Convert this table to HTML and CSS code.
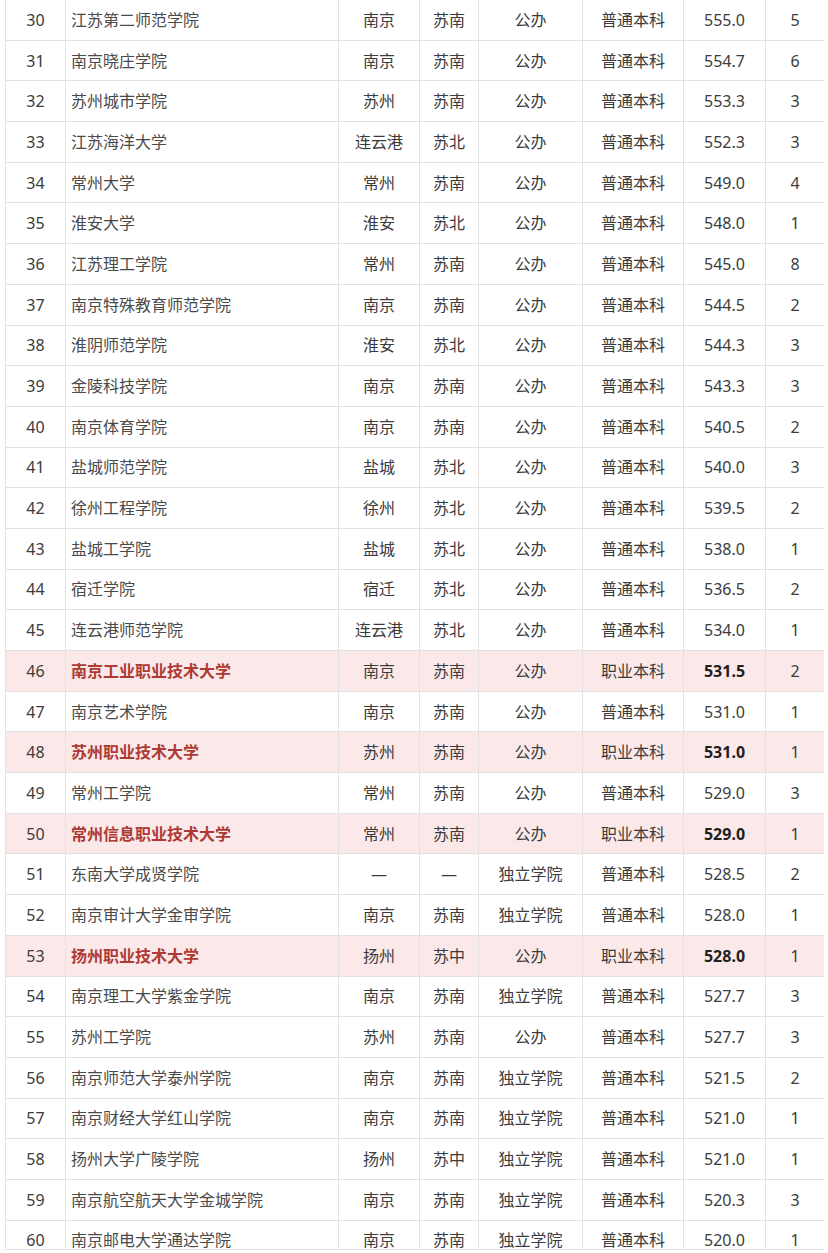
FILE: index.html
```html
<!DOCTYPE html>
<html lang="zh-CN">
<head>
<meta charset="utf-8">
<title>江苏院校排名</title>
<link rel="stylesheet" href="styles.css">
</head>
<body>
<div class="frame">
<table class="rank">
<colgroup>
<col class="c-no"><col class="c-name"><col class="c-city"><col class="c-area"><col class="c-type"><col class="c-level"><col class="c-score"><col class="c-n">
</colgroup>
<tbody>
<tr><td>30</td><td class="name">江苏第二师范学院</td><td>南京</td><td>苏南</td><td>公办</td><td>普通本科</td><td>555.0</td><td>5</td></tr>
<tr><td>31</td><td class="name">南京晓庄学院</td><td>南京</td><td>苏南</td><td>公办</td><td>普通本科</td><td>554.7</td><td>6</td></tr>
<tr><td>32</td><td class="name">苏州城市学院</td><td>苏州</td><td>苏南</td><td>公办</td><td>普通本科</td><td>553.3</td><td>3</td></tr>
<tr><td>33</td><td class="name">江苏海洋大学</td><td>连云港</td><td>苏北</td><td>公办</td><td>普通本科</td><td>552.3</td><td>3</td></tr>
<tr><td>34</td><td class="name">常州大学</td><td>常州</td><td>苏南</td><td>公办</td><td>普通本科</td><td>549.0</td><td>4</td></tr>
<tr><td>35</td><td class="name">淮安大学</td><td>淮安</td><td>苏北</td><td>公办</td><td>普通本科</td><td>548.0</td><td>1</td></tr>
<tr><td>36</td><td class="name">江苏理工学院</td><td>常州</td><td>苏南</td><td>公办</td><td>普通本科</td><td>545.0</td><td>8</td></tr>
<tr><td>37</td><td class="name">南京特殊教育师范学院</td><td>南京</td><td>苏南</td><td>公办</td><td>普通本科</td><td>544.5</td><td>2</td></tr>
<tr><td>38</td><td class="name">淮阴师范学院</td><td>淮安</td><td>苏北</td><td>公办</td><td>普通本科</td><td>544.3</td><td>3</td></tr>
<tr><td>39</td><td class="name">金陵科技学院</td><td>南京</td><td>苏南</td><td>公办</td><td>普通本科</td><td>543.3</td><td>3</td></tr>
<tr><td>40</td><td class="name">南京体育学院</td><td>南京</td><td>苏南</td><td>公办</td><td>普通本科</td><td>540.5</td><td>2</td></tr>
<tr><td>41</td><td class="name">盐城师范学院</td><td>盐城</td><td>苏北</td><td>公办</td><td>普通本科</td><td>540.0</td><td>3</td></tr>
<tr><td>42</td><td class="name">徐州工程学院</td><td>徐州</td><td>苏北</td><td>公办</td><td>普通本科</td><td>539.5</td><td>2</td></tr>
<tr><td>43</td><td class="name">盐城工学院</td><td>盐城</td><td>苏北</td><td>公办</td><td>普通本科</td><td>538.0</td><td>1</td></tr>
<tr><td>44</td><td class="name">宿迁学院</td><td>宿迁</td><td>苏北</td><td>公办</td><td>普通本科</td><td>536.5</td><td>2</td></tr>
<tr><td>45</td><td class="name">连云港师范学院</td><td>连云港</td><td>苏北</td><td>公办</td><td>普通本科</td><td>534.0</td><td>1</td></tr>
<tr class="hl"><td>46</td><td class="name">南京工业职业技术大学</td><td>南京</td><td>苏南</td><td>公办</td><td>职业本科</td><td class="score">531.5</td><td>2</td></tr>
<tr><td>47</td><td class="name">南京艺术学院</td><td>南京</td><td>苏南</td><td>公办</td><td>普通本科</td><td>531.0</td><td>1</td></tr>
<tr class="hl"><td>48</td><td class="name">苏州职业技术大学</td><td>苏州</td><td>苏南</td><td>公办</td><td>职业本科</td><td class="score">531.0</td><td>1</td></tr>
<tr><td>49</td><td class="name">常州工学院</td><td>常州</td><td>苏南</td><td>公办</td><td>普通本科</td><td>529.0</td><td>3</td></tr>
<tr class="hl"><td>50</td><td class="name">常州信息职业技术大学</td><td>常州</td><td>苏南</td><td>公办</td><td>职业本科</td><td class="score">529.0</td><td>1</td></tr>
<tr><td>51</td><td class="name">东南大学成贤学院</td><td>—</td><td>—</td><td>独立学院</td><td>普通本科</td><td>528.5</td><td>2</td></tr>
<tr><td>52</td><td class="name">南京审计大学金审学院</td><td>南京</td><td>苏南</td><td>独立学院</td><td>普通本科</td><td>528.0</td><td>1</td></tr>
<tr class="hl"><td>53</td><td class="name">扬州职业技术大学</td><td>扬州</td><td>苏中</td><td>公办</td><td>职业本科</td><td class="score">528.0</td><td>1</td></tr>
<tr><td>54</td><td class="name">南京理工大学紫金学院</td><td>南京</td><td>苏南</td><td>独立学院</td><td>普通本科</td><td>527.7</td><td>3</td></tr>
<tr><td>55</td><td class="name">苏州工学院</td><td>苏州</td><td>苏南</td><td>公办</td><td>普通本科</td><td>527.7</td><td>3</td></tr>
<tr><td>56</td><td class="name">南京师范大学泰州学院</td><td>南京</td><td>苏南</td><td>独立学院</td><td>普通本科</td><td>521.5</td><td>2</td></tr>
<tr><td>57</td><td class="name">南京财经大学红山学院</td><td>南京</td><td>苏南</td><td>独立学院</td><td>普通本科</td><td>521.0</td><td>1</td></tr>
<tr><td>58</td><td class="name">扬州大学广陵学院</td><td>扬州</td><td>苏中</td><td>独立学院</td><td>普通本科</td><td>521.0</td><td>1</td></tr>
<tr><td>59</td><td class="name">南京航空航天大学金城学院</td><td>南京</td><td>苏南</td><td>独立学院</td><td>普通本科</td><td>520.3</td><td>3</td></tr>
<tr><td>60</td><td class="name">南京邮电大学通达学院</td><td>南京</td><td>苏南</td><td>独立学院</td><td>普通本科</td><td>520.0</td><td>1</td></tr>
</tbody>
</table>
</div>
</body>
</html>
```
FILE: styles.css
```css
html, body {
  margin: 0;
  padding: 0;
  background: #ffffff;
}

.frame {
  margin-left: 5px;
  width: 819px;
  height: 1249px;
  overflow: hidden;
  border-bottom: 1px solid #e2e2e2;
}

.rank {
  width: 819px;
  margin-top: -1px;
  border-collapse: collapse;
  table-layout: fixed;
  font-family: "Noto Sans", "Noto Sans CJK SC", sans-serif;
  font-size: 16px;
  color: #3c3c3c;
}

.c-no { width: 60px; }
.c-name { width: 273px; }
.c-city { width: 81px; }
.c-area { width: 59px; }
.c-type { width: 104px; }
.c-level { width: 101px; }
.c-score { width: 82px; }
.c-n { width: 59px; }

.rank td {
  height: 39.7px;
  padding: 0;
  border: 1px solid #e2e2e2;
  text-align: center;
  vertical-align: middle;
  white-space: nowrap;
  line-height: 20px;
}

.rank td.name {
  text-align: left;
  padding-left: 5px;
  color: #4a4a4a;
}

.rank tr.hl td {
  background: #fbe9ea;
}

.rank tr.hl td.name {
  color: #ad3a33;
  font-weight: bold;
}

.rank tr.hl td.score {
  font-weight: bold;
  color: #1f1f1f;
}
```
